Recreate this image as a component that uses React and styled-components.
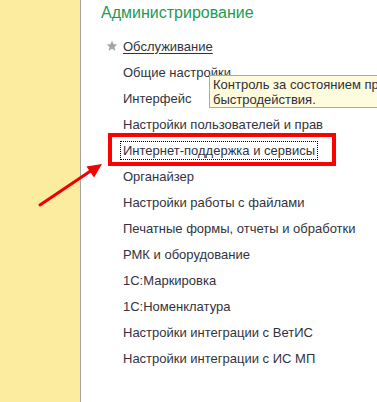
import React from "react";
import styled, { createGlobalStyle } from "styled-components";

const Global = createGlobalStyle`
  html, body { margin: 0; padding: 0; overflow: hidden; background: #fff; }
  body { font-family: Arial, "Liberation Sans", sans-serif; }
`;

const Page = styled.div`
  position: relative;
  display: flex;
  width: 377px;
  height: 402px;
  overflow: hidden;
`;

const Sidebar = styled.aside`
  flex: 0 0 80px;
  background: #fbec9f;
  border-right: 1px solid #a3a3a3;
`;

const Main = styled.main`
  flex: 1;
  padding: 4px 0 0 20px;
  color: #333340;
`;

const Heading = styled.h1`
  margin: 0;
  font-size: 16px;
  font-weight: normal;
  line-height: 18px;
  color: #1d9b55;
`;

const List = styled.ul`
  list-style: none;
  margin: 11px 0 0;
  padding: 0;
`;

const Row = styled.li`
  position: relative;
  display: flex;
  align-items: center;
  height: 26px;
  padding-left: 5px;
  font-size: 13px;
  line-height: 15px;
`;

const IconSlot = styled.span`
  display: flex;
  align-items: center;
  width: 17px;
  flex: 0 0 17px;
`;

const Label = styled.span`
  white-space: nowrap;
  text-decoration: ${(p) => (p.$underline ? "underline" : "none")};
  text-underline-offset: 2px;
  ${(p) =>
    p.$focused &&
    `
    margin-left: -3px;
    padding: 1px 2px;
    border: 1px dotted #000;
  `}
`;

const Highlight = styled.span`
  position: absolute;
  left: 7px;
  top: -4px;
  width: 220px;
  height: 25px;
  border: 4px solid #ff0000;
  pointer-events: none;
`;

const Tooltip = styled.div`
  position: absolute;
  left: 209px;
  top: 75px;
  width: 300px;
  padding: 1px 3px 0;
  background: #fffbdd;
  border: 1px solid #b3aa88;
  font-size: 13px;
  line-height: 15px;
  color: #2f2f3a;
`;

const TipLine = styled.div`
  white-space: nowrap;
`;

const Overlay = styled.svg`
  position: absolute;
  left: 0;
  top: 0;
  pointer-events: none;
`;

const Star = () => (
  <svg width="12" height="12" viewBox="0 0 24 24">
    <path
      d="M12 1.5l3.1 7.1 7.6.6-5.8 5 1.8 7.5L12 17.7l-6.7 4 1.8-7.5-5.8-5 7.6-.6z"
      fill="#a4a4a4"
    />
  </svg>
);

const items = [
  { text: "Обслуживание", star: true, underline: true },
  { text: "Общие настройки" },
  { text: "Интерфейс" },
  { text: "Настройки пользователей и прав" },
  { text: "Интернет-поддержка и сервисы", focused: true },
  { text: "Органайзер" },
  { text: "Настройки работы с файлами" },
  { text: "Печатные формы, отчеты и обработки" },
  { text: "РМК и оборудование" },
  { text: "1С:Маркировка" },
  { text: "1С:Номенклатура" },
  { text: "Настройки интеграции с ВетИС" },
  { text: "Настройки интеграции с ИС МП" },
];

export default function App() {
  return (
    <>
      <Global />
      <Page>
        <Sidebar />
        <Main>
          <Heading>Администрирование</Heading>
          <List>
            {items.map((it) => (
              <Row key={it.text}>
                <IconSlot>{it.star && <Star />}</IconSlot>
                <Label $underline={it.underline} $focused={it.focused}>
                  {it.text}
                </Label>
                {it.focused && <Highlight />}
              </Row>
            ))}
          </List>
        </Main>
        <Tooltip>
          <TipLine>Контроль за состоянием производительности и</TipLine>
          <TipLine>быстродействия.</TipLine>
        </Tooltip>
        <Overlay width="377" height="402" viewBox="0 0 377 402">
          <line x1="40" y1="205" x2="92" y2="170" stroke="#f20000" strokeWidth="3" strokeLinecap="round" />
          <polygon points="102,164 86.5,166.5 94,177.5" fill="#f20000" />
        </Overlay>
      </Page>
    </>
  );
}
